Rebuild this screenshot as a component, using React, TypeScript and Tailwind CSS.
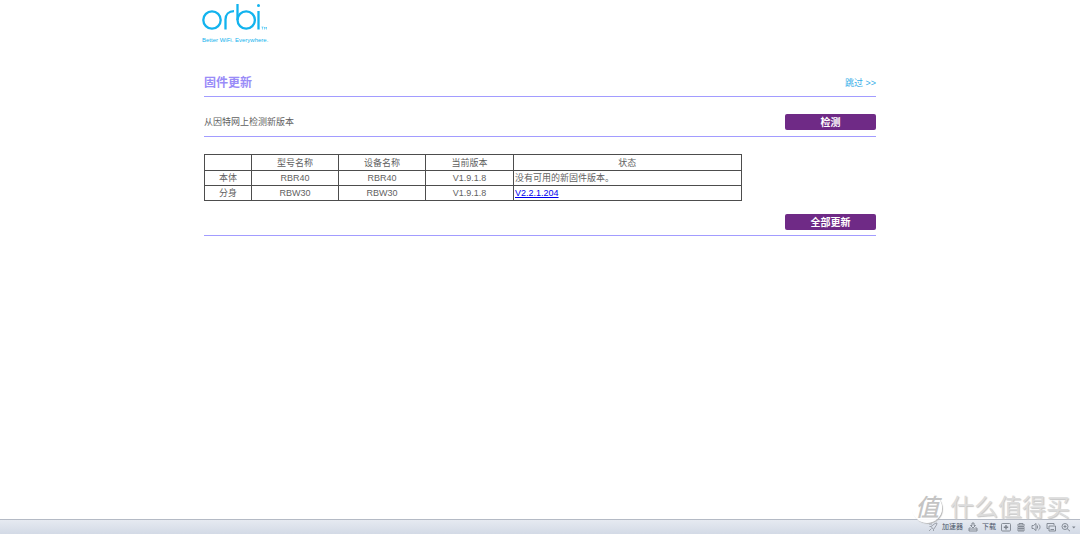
import type { ReactNode } from "react";

type Device = {
  role: string;
  model: string;
  name: string;
  version: string;
  status: string;
  updatable: boolean;
};

const devices: Device[] = [
  { role: "本体", model: "RBR40", name: "RBR40", version: "V1.9.1.8", status: "没有可用的新固件版本。", updatable: false },
  { role: "分身", model: "RBW30", name: "RBW30", version: "V1.9.1.8", status: "V2.2.1.204", updatable: true },
];

function OrbiLogo() {
  return (
    <svg viewBox="0 0 66 30" className="block h-[30px] w-[66px]" fill="none" stroke="#12b3ee" strokeWidth="2.3" aria-label="orbi">
      <circle cx="10" cy="18" r="8.7" />
      <path d="M23.5 27.5V17.5c0-5 3.2-8.3 8.5-8.3" />
      <path d="M35.5 2v16" />
      <circle cx="44.2" cy="18" r="8.7" />
      <path d="M56.5 9v18.5" />
      <circle cx="56.5" cy="3.6" r="1.5" fill="#12b3ee" stroke="none" />
      <path d="M59.5 25h2M60.5 25v2.5M62.500 27.500V25l1 1.300 1-1.300v2.500" strokeWidth="0.5" />
    </svg>
  );
}

function ActionButton({ children }: { children: ReactNode }) {
  return (
    <button type="button" className="h-4 w-[91px] rounded-xs bg-[#6f2a86] pt-px text-center text-[10px] leading-4 font-bold text-white">
      {children}
    </button>
  );
}

function BarIcon({ label, children }: { label: string; children: ReactNode }) {
  return (
    <button type="button" aria-label={label} className="shrink-0">
      <svg viewBox="0 0 10 10" className="block size-[10px]" fill="none" stroke="#7d838d" strokeWidth="0.9">
        {children}
      </svg>
    </button>
  );
}

function StatusBar() {
  return (
    <footer className="flex h-[15px] items-center justify-end gap-[5px] border-t border-[#b4bac5] bg-linear-to-b from-[#e6eaf1] to-[#d3dae6] pr-1 text-[7px] leading-3 text-[#4a5568]">
      <button type="button" className="flex items-center gap-1">
        <svg viewBox="0 0 10 10" className="size-[10px]" fill="none" stroke="#969ba4" strokeWidth="0.9">
          <path d="M1 9l2.5-2.5M3 4.5l2.5 3L8.5 3 9 1 7 1.5zM3 4.5H1.5M5.5 7.5V9M1 2h3" />
        </svg>
        加速器
      </button>
      <button type="button" className="flex items-center gap-1">
        <svg viewBox="0 0 10 10" className="size-[10px]" fill="none" stroke="#7d838d" strokeWidth="0.9">
          <path d="M4 1h2v2.5h1.5L5 6 2.5 3.5H4zM2.5 5L1 6.500V9h8V6.500L7.500 5M1 7h8" />
        </svg>
        下载
      </button>
      <BarIcon label="医生">
        <rect x="0.5" y="1.5" width="9" height="7.5" rx="1" />
        <path d="M5 3v4.5M2.8 5.2h4.4" strokeWidth="1.4" />
      </BarIcon>
      <BarIcon label="清理">
        <path d="M1 3h8M3 3V1.5h4V3M2 4.5h6V9H2zM4 4.5V9M6 4.5V9M2 6.5h6" />
      </BarIcon>
      <BarIcon label="声音">
        <path d="M1 3.5h1.5L5 1.5v7L2.5 6.5H1zM6.5 3.5v3M7.5 2c2 1.5 2 4.5 0 6" />
      </BarIcon>
      <BarIcon label="窗口">
        <path d="M2.5 6.5H1v-5h7V3M3 4h6.5v5H3zM4.5 7.5H8" />
      </BarIcon>
      <button type="button" aria-label="缩放">
        <svg viewBox="0 0 15 10" className="block h-[10px] w-[15px]" fill="none" stroke="#7d838d" strokeWidth="0.9">
          <circle cx="4" cy="4.5" r="3" />
          <path d="M6.2 6.7L9 9.2M2.5 4.5h3M4 3v3" />
          <path d="M11 4.5h3.5L12.8 6.5z" fill="#7d838d" stroke="none" />
        </svg>
      </button>
    </footer>
  );
}

function Watermark() {
  return (
    <div className="pointer-events-none absolute right-2.5 bottom-2.5 flex items-center gap-2 text-[#dcdcdc] [text-shadow:1px_1px_1px_#c6c6c6]">
      <span className="flex size-[30px] items-center justify-center rounded-full bg-white/90 text-[24px] leading-none font-medium italic text-[#c4c4c4] shadow-[1px_1px_1px_#b8b8b8] [text-shadow:none]">
        值
      </span>
      <span className="text-[24px] leading-8">什么值得买</span>
    </div>
  );
}

export default function App() {
  return (
    <div className="relative flex min-h-screen flex-col bg-white font-['Liberation_Sans','Noto_Sans_CJK_SC',sans-serif] text-[9px] text-[#5f5f5f]">
      <main className="mx-auto w-full max-w-2xl flex-1">
        <header className="-ml-0.5 pt-0.5">
          <OrbiLogo />
          <p className="mt-0.5 text-[6px] leading-3 text-[#12b3ee]">Better WiFi. Everywhere.</p>
        </header>

        <div className="mt-[27px] flex items-center justify-between border-b border-[#a29cff] pb-[3px]">
          <h1 className="text-[12px] leading-5 font-bold text-[#9a8cf8]">固件更新</h1>
          <a href="#skip" className="leading-5 text-[#35aee8]">
            跳过 &gt;&gt;
          </a>
        </div>

        <div className="flex items-center justify-between border-b border-[#a29cff] pt-[17px] pb-1.5">
          <p className="leading-4">从因特网上检测新版本</p>
          <ActionButton>检测</ActionButton>
        </div>

        <table className="mt-[17px] w-4/5 table-fixed border-collapse text-center leading-[14px] [&_td]:border [&_td]:border-[#4d4d4d] [&_td]:p-0 [&_th]:border [&_th]:border-[#4d4d4d] [&_th]:p-0 [&_th]:font-normal">
          <colgroup>
            <col className="w-[47px]" />
            <col className="w-[87px]" />
            <col className="w-[87px]" />
            <col className="w-[88px]" />
            <col />
          </colgroup>
          <thead>
            <tr>
              <th className="pt-px!" />
              <th className="pt-px!">型号名称</th>
              <th className="pt-px!">设备名称</th>
              <th className="pt-px!">当前版本</th>
              <th className="pt-px!">状态</th>
            </tr>
          </thead>
          <tbody>
            {devices.map((device) => (
              <tr key={device.role}>
                <td>{device.role}</td>
                <td>{device.model}</td>
                <td>{device.name}</td>
                <td>{device.version}</td>
                <td className="text-left">
                  <div className="pl-px">
                    {device.updatable ? (
                      <a href="#firmware" className="text-[#0000ee] underline">
                        {device.status}
                      </a>
                    ) : (
                      device.status
                    )}
                  </div>
                </td>
              </tr>
            ))}
          </tbody>
        </table>

        <div className="flex justify-end border-b border-[#a29cff] pt-[13px] pb-[5px]">
          <ActionButton>全部更新</ActionButton>
        </div>
      </main>
      <StatusBar />
      <Watermark />
    </div>
  );
}
